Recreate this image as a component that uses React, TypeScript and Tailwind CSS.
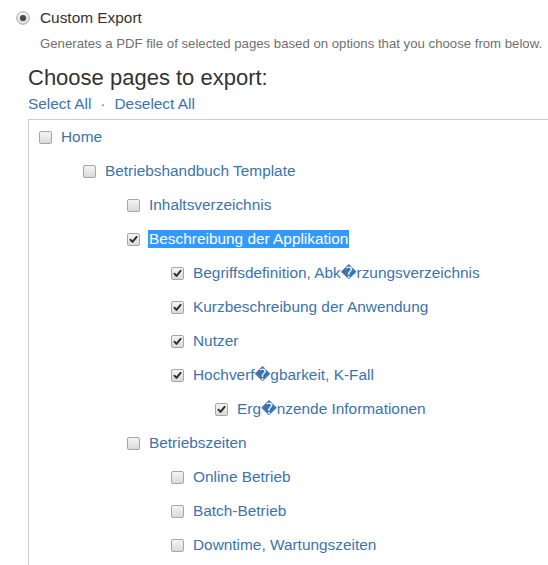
import React from "react";

type Node = { title: string; checked?: boolean; selected?: boolean; children?: Node[] };

const tree: Node[] = [
  {
    title: "Home",
    children: [
      {
        title: "Betriebshandbuch Template",
        children: [
          { title: "Inhaltsverzeichnis" },
          {
            title: "Beschreibung der Applikation",
            checked: true,
            selected: true,
            children: [
              { title: "Begriffsdefinition, Abk\uFFFDrzungsverzeichnis", checked: true },
              { title: "Kurzbeschreibung der Anwendung", checked: true },
              { title: "Nutzer", checked: true },
              {
                title: "Hochverf\uFFFDgbarkeit, K-Fall",
                checked: true,
                children: [{ title: "Erg\uFFFDnzende Informationen", checked: true }],
              },
            ],
          },
          {
            title: "Betriebszeiten",
            children: [
              { title: "Online Betrieb" },
              { title: "Batch-Betrieb" },
              { title: "Downtime, Wartungszeiten" },
            ],
          },
        ],
      },
    ],
  },
];

function Checkbox({ checked }: { checked?: boolean }) {
  return (
    <span className="flex h-[13px] w-[13px] shrink-0 items-center justify-center rounded-[2px] border border-[#a6a6a6] bg-gradient-to-b from-[#f4f4f4] to-[#dadada]">
      {checked && (
        <svg width="9" height="9" viewBox="0 0 9 9">
          <path d="M1.4 4.7 L3.5 6.9 L7.6 1.8" fill="none" stroke="#2b2b2b" strokeWidth="1.9" strokeLinecap="round" strokeLinejoin="round" />
        </svg>
      )}
    </span>
  );
}

function Radio() {
  return (
    <svg width="14" height="14" viewBox="0 0 14 14" className="shrink-0">
      <defs>
        <linearGradient id="rg" x1="0" y1="0" x2="0" y2="1">
          <stop offset="0" stopColor="#f6f6f6" />
          <stop offset="1" stopColor="#dcdcdc" />
        </linearGradient>
      </defs>
      <circle cx="7" cy="7" r="6.3" fill="url(#rg)" stroke="#a9a9a9" strokeWidth="1" />
      <circle cx="7" cy="7" r="3.1" fill="#4a4a4a" />
    </svg>
  );
}

function TreeList({ nodes, root }: { nodes: Node[]; root?: boolean }) {
  return (
    <ul className={root ? "" : "pl-[44px]"}>
      {nodes.map((n) => (
        <li key={n.title}>
          <div className="flex h-[34px] items-center">
            <Checkbox checked={n.checked} />
            <span
              className={
                "leading-[18px] " +
                (n.selected ? "ml-[8px] bg-[#3399ff] px-px text-white" : "ml-[9px] text-[#3b73af]")
              }
            >
              {n.title}
            </span>
          </div>
          {n.children && <TreeList nodes={n.children} />}
        </li>
      ))}
    </ul>
  );
}

export default function App() {
  return (
    <div
      className="h-[565px] w-full overflow-hidden bg-white text-[15.4px] text-[#333]"
      style={{ fontFamily: '"Liberation Sans", Arial, "DejaVu Sans", sans-serif' }}
    >
      <div className="flex items-center pl-[16px] pt-[8px] leading-[20px]">
        <Radio />
        <span className="ml-[10px]">Custom Export</span>
      </div>
      <p className="mt-[8px] whitespace-nowrap pl-[40px] text-[13.2px] leading-[16px] text-[#707070]">
        Generates a PDF file of selected pages based on options that you choose from below.
      </p>
      <div className="pl-[28px]">
        <h2 className="mt-[12px] text-[22px] leading-[28px] text-[#333]">Choose pages to export:</h2>
        <div className="mt-[2px] flex items-center leading-[20px]">
          <a className="text-[#3b73af]">Select All</a>
          <span className="mx-[9px] text-[#707070]">·</span>
          <a className="text-[#3b73af]">Deselect All</a>
        </div>
        <div className="mt-[5px] border-l border-t border-[#cccccc] pb-[40px] pl-[10px]">
          <TreeList nodes={tree} root />
        </div>
      </div>
    </div>
  );
}
